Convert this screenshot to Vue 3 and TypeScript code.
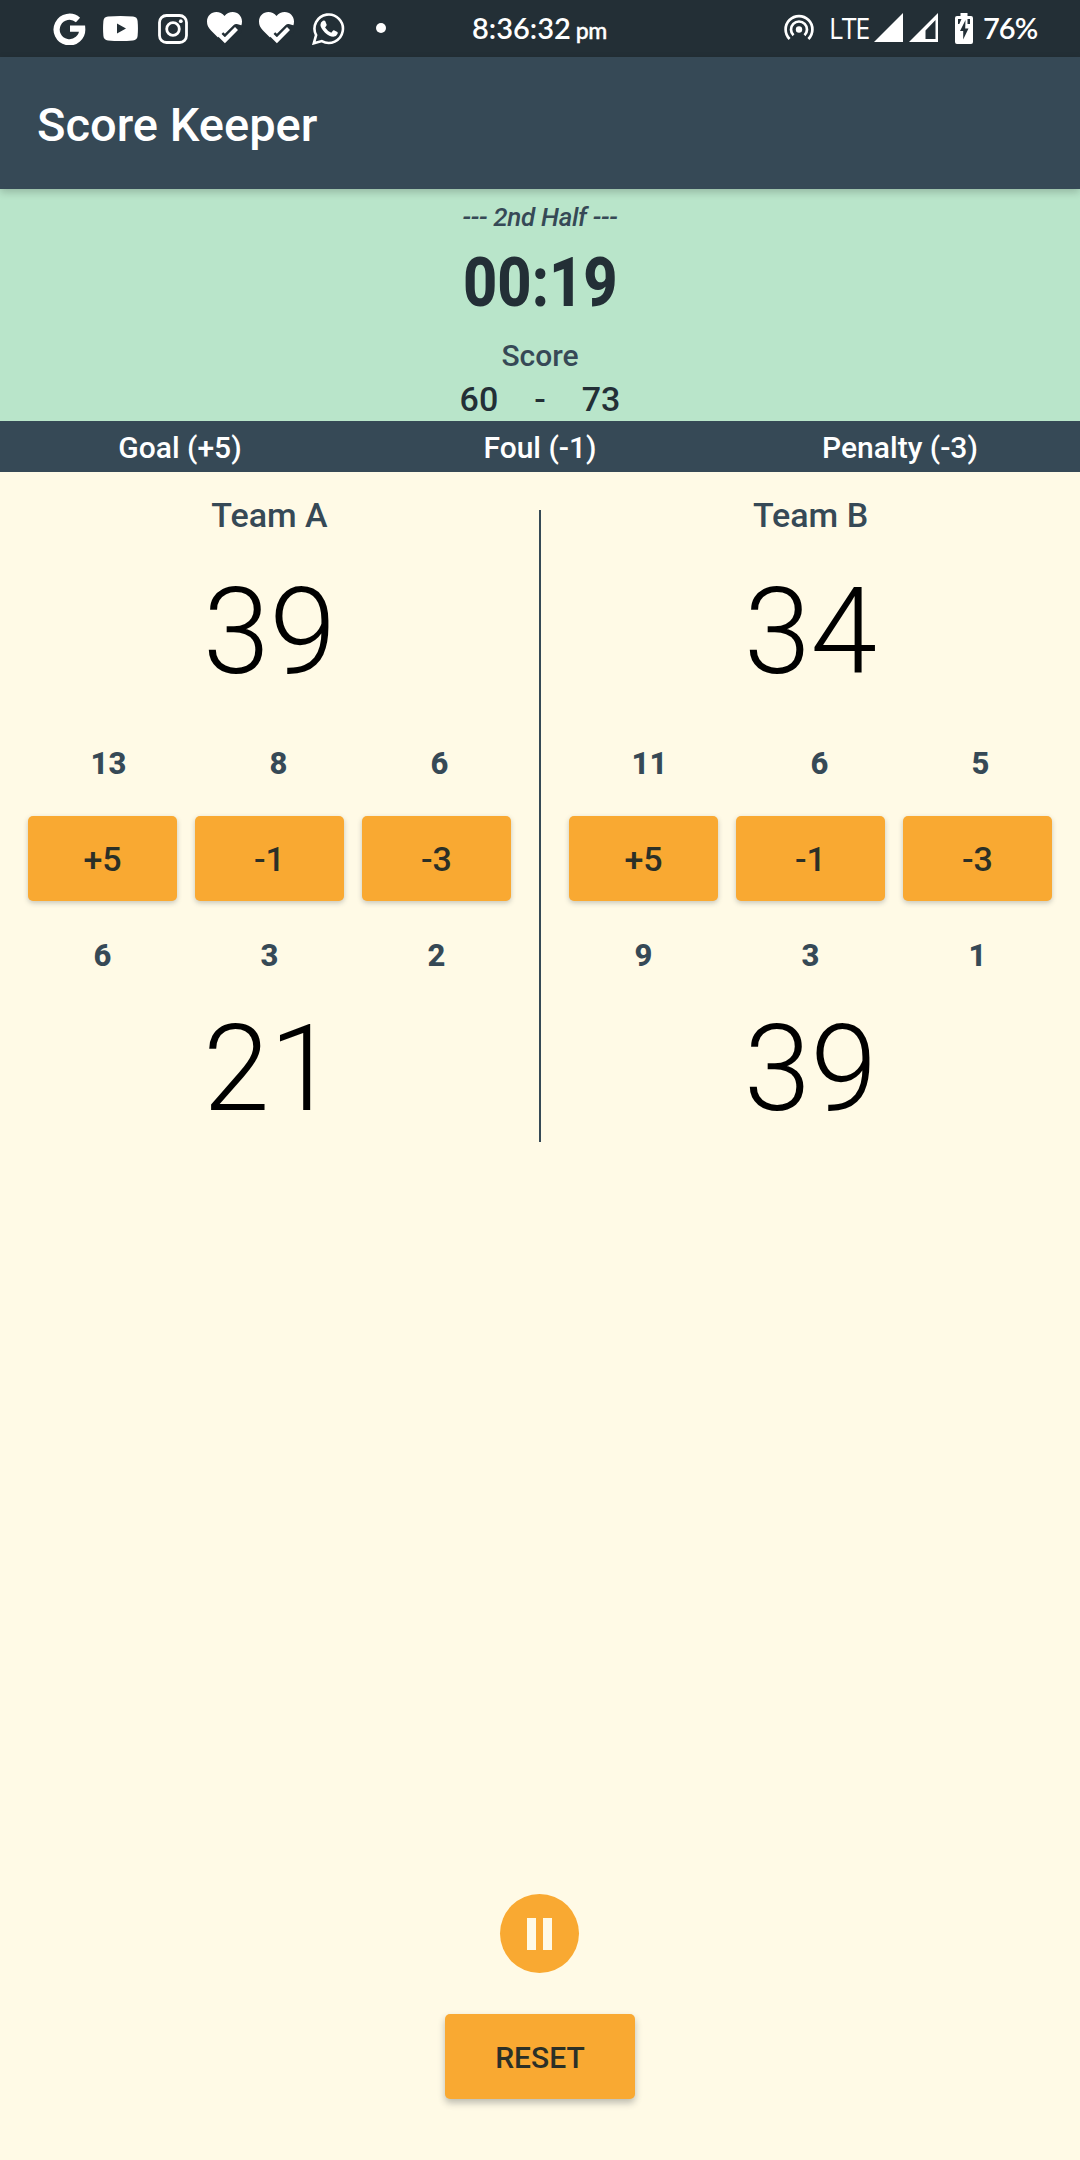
<script setup lang="ts">
interface Team {
  name: string
  second: number
  secondCounts: number[]
  firstCounts: number[]
  first: number
}

const time = '00:19'
const totals = [60, 73]
const legend = ['Goal (+5)', 'Foul (-1)', 'Penalty (-3)']
const actions = ['+5', '-1', '-3']
const teams: Team[] = [
  { name: 'Team A', second: 39, secondCounts: [13, 8, 6], firstCounts: [6, 3, 2], first: 21 },
  { name: 'Team B', second: 34, secondCounts: [11, 6, 5], firstCounts: [9, 3, 1], first: 39 },
]
</script>

<template>
  <div class="screen">
    <div class="status">
      <div class="notifications">
        <svg class="ic g" viewBox="0 0 33 33" width="33" height="33">
          <path d="M25 8A12.800 12.800 0 1 0 29.200 16.600H17" fill="none" stroke="#fff" stroke-width="6.200" />
        </svg>
        <svg class="ic yt" viewBox="0 0 35 25" width="35" height="25">
          <path fill="#fff" fill-rule="evenodd" d="M5 .6Q17.500-.5 30 .6Q34.300 1 34.600 5Q35.300 12.500 34.600 20Q34.300 24 30 24.400Q17.500 25.500 5 24.400Q.7 24 .4 20Q-.3 12.500.4 5Q.7 1 5 .6ZM14 7.500V17.500L23 12.500Z" />
        </svg>
        <svg class="ic ig" viewBox="0 0 30 30" width="30" height="30">
          <rect x="1.500" y="1.500" width="27" height="27" rx="7" fill="none" stroke="#fff" stroke-width="2.800" />
          <circle cx="15" cy="15" r="6.300" fill="none" stroke="#fff" stroke-width="2.800" />
          <circle cx="22.800" cy="7.200" r="1.900" fill="#fff" />
        </svg>
        <svg v-for="n in 2" :key="n" class="ic heart" viewBox="0 0 35 32" width="35" height="32">
          <path fill="#fff" d="M17.500 32L4 18.500C1.200 15.500 0 13 0 9.500C0 4 4.200 0 9.300 0C12.500 0 15.500 1.500 17.500 4C19.500 1.500 22.500 0 25.700 0C31 0 35 4.200 35 9.500C35 13 33.800 15.500 31 18.500Z" />
          <path d="M13.200 23.200L17.900 27.900L29.500 16.300L35 18" fill="none" stroke="#232f36" stroke-width="8.600" stroke-linejoin="round" />
          <path d="M12.600 23L17.900 28.200L29.500 16.600" fill="none" stroke="#fff" stroke-width="4.200" />
        </svg>
        <svg class="ic wa" viewBox="0 0 33 33" width="33" height="33">
          <path d="M1.800 31.300L4.100 23.200A14.200 14.200 0 1 1 9.800 29.100Z" fill="none" stroke="#fff" stroke-width="2.600" />
          <path fill="#fff" d="M10.900 8.800Q12.500 8 13.300 9.300L14.700 12.700Q14.900 13.500 13.100 15.500Q15.500 19.300 19.300 20.700L21.100 18.500Q21.700 18 22.500 18.400L25.400 19.900Q26 20.300 25.600 21.700Q24.500 24.600 21.300 24.800Q17.500 24.600 13 20.700Q8.700 16.400 8.400 13Q8.400 10.300 10.900 8.800Z" />
        </svg>
        <i class="more"></i>
      </div>
      <div class="clock"><span class="hms">8:36:32</span><span class="pm">pm</span></div>
      <div class="system">
        <svg class="hotspot" viewBox="0 0 30 27" width="30" height="27">
          <g fill="none" stroke="#fff" stroke-width="2.700">
            <path d="M5.600 25A13.400 13.400 0 1 1 24.400 25" />
            <path d="M9.500 21.300A8 8 0 1 1 20.500 21.300" />
          </g>
          <circle cx="15" cy="15.500" r="3.200" fill="#fff" />
        </svg>
        <span class="lte">LTE</span>
        <svg class="sig" viewBox="0 0 29 29" width="29" height="29"><path fill="#fff" d="M29 0V29H0Z" /></svg>
        <svg class="sig two" viewBox="0 0 29 29" width="29" height="29">
          <path fill="#fff" fill-rule="evenodd" d="M29 0V29H0ZM26.500 7V26H16.500V17.500Z" />
        </svg>
        <svg class="batt" viewBox="0 0 18 31" width="18" height="31">
          <path fill="#fff" fill-rule="evenodd" d="M5.500 0H12.500V3H16Q18 3 18 5V29Q18 31 16 31H2Q0 31 0 29V5Q0 3 2 3H5.500ZM10.500 7L5 18H8.200V26.500L13.500 15.500H10.200ZM3 6V11H4.300L6.500 6ZM12.500 6V11H15V6Z" />
        </svg>
        <span class="pct">76%</span>
      </div>
    </div>

    <header class="appbar"><h1>Score Keeper</h1></header>

    <section class="summary">
      <div class="half">--- 2nd Half ---</div>
      <div class="time"><span>{{ time }}</span></div>
      <div class="label">Score</div>
      <div class="totals"><span>{{ totals[0] }}</span><span>-</span><span>{{ totals[1] }}</span></div>
    </section>

    <div class="legend"><span v-for="l in legend" :key="l">{{ l }}</span></div>

    <main class="teams">
      <template v-for="(t, i) in teams" :key="t.name">
        <div v-if="i" class="divider"></div>
        <section class="team">
          <h2>{{ t.name }}</h2>
          <div class="big">{{ t.second }}</div>
          <div class="counts upper"><span v-for="(c, k) in t.secondCounts" :key="k">{{ c }}</span></div>
          <div class="actions"><button v-for="a in actions" :key="a">{{ a }}</button></div>
          <div class="counts lower"><span v-for="(c, k) in t.firstCounts" :key="k">{{ c }}</span></div>
          <div class="big">{{ t.first }}</div>
        </section>
      </template>
    </main>

    <footer class="controls">
      <button class="pause" aria-label="Pause"><i></i><i></i></button>
      <button class="reset">RESET</button>
    </footer>
  </div>
</template>

<style>
body { margin: 0; background: #fffae6; }
</style>

<style scoped>
* { box-sizing: border-box; }
.screen { width: 1080px; height: 2160px; display: flex; flex-direction: column; overflow: hidden; background: #fffae6; font-family: Roboto, sans-serif; font-weight: 500; color: #364956; }
h1, h2 { margin: 0; font-weight: 500; }
svg { display: block; flex: none; }
button { border: 0; padding: 0; font: inherit; }

.status { height: 57px; flex: none; display: grid; grid-template-columns: 472px 288px 320px; background: #232f36; color: #fff; }
.notifications { display: flex; align-items: flex-start; padding: 12px 0 0 53px; }
.yt { margin: 4px 0 0 17px; }
.ig { margin: 2px 0 0 20px; }
.heart { margin-left: 19px; }
.heart + .heart { margin-left: 17px; }
.wa { margin-left: 18px; }
.more { width: 10px; height: 10px; border-radius: 50%; background: #fff; margin: 11px 0 0 31px; }
.clock { display: flex; align-items: baseline; font-family: Lato, sans-serif; line-height: 55px; white-space: nowrap; }
.hms { font-size: 29px; font-weight: 600; }
.pm { font-size: 23px; margin-left: 5px; letter-spacing: -0.500px; -webkit-text-stroke: 0.400px #fff; }
.system { display: flex; align-items: flex-start; padding-left: 24px; }
.hotspot { margin-top: 14px; }
.lte { width: 43px; margin-left: 15px; font-family: "Open Sans", sans-serif; font-weight: 400; font-size: 29px; line-height: 55px; letter-spacing: -1.500px; white-space: nowrap; transform: scaleX(0.93); transform-origin: left; }
.sig { margin-top: 13px; margin-left: 2px; }
.sig.two { margin-left: 6px; }
.batt { margin: 13px 0 0 17px; }
.pct { margin-left: 10px; font-family: Lato, sans-serif; font-weight: 600; font-size: 29px; line-height: 55px; letter-spacing: -1px; }

.appbar { height: 132px; flex: none; padding-left: 37px; background: #364956; color: #fff; box-shadow: 0 3px 8px rgba(0, 0, 0, 0.2); position: relative; z-index: 1; }
h1 { font-size: 47px; line-height: 136px; }

.summary { height: 232px; flex: none; background: #b9e5ca; text-align: center; }
.half { padding-top: 12px; height: 56px; font-size: 26px; line-height: 32px; font-style: italic; letter-spacing: -0.300px; }
.time { height: 76px; color: #232f36; font-size: 68px; line-height: 76px; font-weight: 800; }
.time span { display: inline-block; transform: scaleX(0.875); }
.label { height: 59px; font-size: 30px; line-height: 69px; }
.totals { display: flex; justify-content: center; gap: 36px; color: #232f36; font-size: 34px; line-height: 38px; }

.legend { height: 51px; flex: none; display: grid; grid-template-columns: repeat(3, 1fr); text-align: center; background: #364956; color: #fff; font-size: 30px; line-height: 53px; }

.teams { display: flex; height: 670px; flex: none; }
.divider { width: 2px; height: 632px; margin-top: 38px; background: #364956; }
.team { width: 539px; padding: 22px 19px 0; text-align: center; }
h2 { font-size: 34px; line-height: 43px; }
.big { height: 141px; margin-top: 25px; color: #000; font-size: 120px; line-height: 141px; font-weight: 300; }
.counts { display: flex; height: 36px; font-size: 31px; line-height: 36px; font-weight: 800; }
.counts span { flex: 1 1 auto; }
.upper { margin-top: 43px; }
.actions { display: flex; margin: 34px 9px 0; gap: 18px; }
.actions button { flex: 1; height: 85px; border-radius: 5px; background: #f9a932; color: #2b3027; font-size: 34px; line-height: 87px; box-shadow: 0 2px 5px rgba(35, 47, 54, 0.25); }
.lower { margin-top: 37px; }
.lower + .big { margin-top: 25px; }

.controls { flex: 1; display: flex; flex-direction: column; align-items: center; justify-content: flex-end; padding-bottom: 61px; }
.pause { width: 79px; height: 79px; margin-right: 1px; border-radius: 50%; background: #f9a932; display: flex; align-items: center; justify-content: center; gap: 7px; }
.pause i { width: 9px; height: 32px; background: #fffae6; }
.reset { width: 190px; height: 85px; margin-top: 41px; border-radius: 5px; background: #f9a932; color: #2b3027; font-size: 30px; line-height: 87px; box-shadow: 0 4px 7px rgba(35, 47, 54, 0.3); }
</style>
